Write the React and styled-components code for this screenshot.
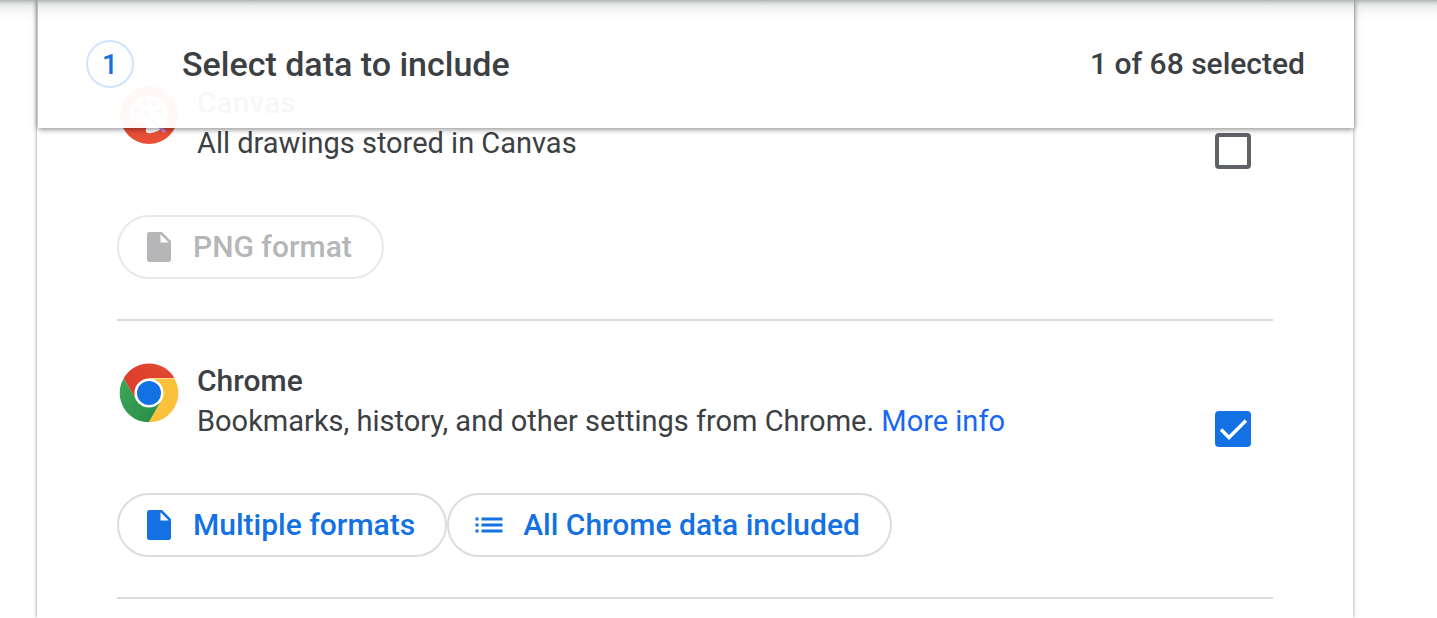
import React, { useState } from "react";
import styled, { createGlobalStyle, css } from "styled-components";

const GlobalStyle = createGlobalStyle`
  *, *::before, *::after { box-sizing: border-box; }
  body {
    margin: 0;
    background: #fff;
    color: #3c4043;
    font-family: Roboto, "Liberation Sans", sans-serif;
    font-size: 29px;
    line-height: 40px;
    overflow: hidden;
  }
`;

const Page = styled.div`
  position: relative;
  min-height: 100vh;
  padding: 0 84px 0 37px;
`;

const TopShadow = styled.div`
  position: absolute;
  inset: 0 0 auto;
  height: 20px;
  z-index: 3;
  pointer-events: none;
  background: linear-gradient(
    rgba(60, 70, 66, 0.4) 0,
    rgba(60, 70, 66, 0.2) 3px,
    rgba(60, 70, 66, 0.1) 6px,
    rgba(60, 70, 66, 0.03) 13px,
    rgba(60, 70, 66, 0) 20px
  );
`;

const Card = styled.main`
  position: relative;
  min-height: 100vh;
  background: #fff;
  box-shadow: 0 0 4px rgba(0, 0, 0, 0.4);
`;

const StepHeader = styled.header`
  position: absolute;
  inset: 0 -1px auto 1px;
  z-index: 2;
  display: flex;
  align-items: center;
  height: 128px;
  padding: 0 49px 0 48px;
  background: rgba(255, 255, 255, 0.96);
  box-shadow: 0 1px 6px rgba(0, 0, 0, 0.5);
`;

const StepNumber = styled.span`
  display: grid;
  place-items: center;
  width: 48px;
  height: 48px;
  margin-right: 48px;
  padding-top: 2px;
  border: 2px solid #d2e3fc;
  border-radius: 50%;
  color: #1471e4;
  font-size: 28px;
  font-weight: 500;
`;

const StepTitle = styled.h1`
  flex: 1;
  margin: 0;
  font-size: 34px;
  font-weight: 500;
`;

const Count = styled.span`
  font-size: 30px;
  font-weight: 500;
`;

const ProductList = styled.ul`
  list-style: none;
  margin: 0;
  padding: 41px 80px 0 80px;
`;

const Product = styled.li`
  display: grid;
  grid-template-columns: 80px 1fr 58px;
  padding: 40px 0;
  border-bottom: 2px solid #dadce0;

  &:first-child { border-top: 2px solid #dadce0; }
`;

const Logo = styled.svg`
  width: 64px;
  height: 64px;
`;

const ProductName = styled.h2`
  margin: 0;
  font-size: 30px;
  font-weight: 500;
`;

const Description = styled.p`
  margin: 0;
`;

const MoreInfo = styled.a`
  color: #1967f2;
  text-decoration: none;
`;

const Tick = styled.input`
  appearance: none;
  width: 36px;
  height: 36px;
  margin: 50px 0 0;
  border: 4px solid #5f6368;
  border-radius: 4px;

  &:checked {
    border: 0;
    background: #1471e4;
  }
`;

const TickCell = styled.label`
  display: grid;
  grid-template-columns: 36px;
  align-content: start;
  > * { grid-area: 1 / 1; }
`;

const TickMark = styled.svg`
  width: 36px;
  height: 36px;
  margin-top: 50px;
  pointer-events: none;
`;

const Chips = styled.div`
  grid-column: 1 / -1;
  display: flex;
  margin-top: 46px;
`;

const Chip = styled.button`
  display: flex;
  align-items: center;
  gap: 16px;
  height: 64px;
  padding: 0 30px 0 22px;
  border: 2px solid #dadce0;
  border-radius: 32px;
  background: transparent;
  color: #1471e4;
  font: 500 30px/40px Roboto, "Liberation Sans", sans-serif;
  white-space: nowrap;

  svg { width: 36px; height: 36px; fill: currentColor; }

  ${(p) => p.disabled && css`
    border-color: #e8e8e9;
    color: #b5b6b8;
  `}
`;

const FileIcon = () => (
  <svg viewBox="0 0 24 24" aria-hidden="true">
    <path d="M5.500 2C4.700 2 4 2.700 4 3.500V20.500C4 21.300 4.700 22 5.500 22H18.500C19.300 22 20 21.300 20 20.500V8L14 2H5.500ZM13 9V3.500L18.500 9H13Z" />
  </svg>
);

const ListIcon = () => (
  <svg viewBox="0 0 24 24" aria-hidden="true">
    <path d="M3 7h2v2H3zM3 11h2v2H3zM3 15h2v2H3zM7 7h14v2H7zM7 11h14v2H7zM7 15h14v2H7z" />
  </svg>
);

const CanvasLogo = () => (
  <Logo viewBox="0 0 64 64" aria-hidden="true">
    <circle cx="32" cy="32" r="29" fill="#e94f37" />
    <path
      d="M32 13C21 13 13 21 13 30C13 37 18 41 25 40C30 40 31 43 29 46C28 49 30 51 34 50C44 49 51 41 51 31C51 21 43 13 32 13Z"
      fill="#fff"
    />
    <g fill="#e94f37">
      <circle cx="27" cy="20" r="3" />
      <circle cx="37" cy="20" r="3" />
      <circle cx="20" cy="28" r="3" />
      <circle cx="44" cy="28" r="3" />
    </g>
    <path d="M29 31L48 49" stroke="#c58af0" strokeWidth="3" />
    <circle cx="29" cy="30" r="3" fill="#e94f37" />
  </Logo>
);

const ChromeLogo = () => (
  <Logo viewBox="0 0 64 64" aria-hidden="true">
    <defs>
      <linearGradient id="red" x1="0" y1="1" x2="1" y2="0">
        <stop offset="0" stopColor="#d93a28" />
        <stop offset="1" stopColor="#e34a33" />
      </linearGradient>
      <linearGradient id="green" x1="1" y1="1" x2="0" y2="0">
        <stop offset="0" stopColor="#278c46" />
        <stop offset="1" stopColor="#3fa65a" />
      </linearGradient>
    </defs>
    <path d="M32 17H57.400A29.300 29.300 0 0 0 6.600 17.400L19.500 39.200L32 32Z" fill="url(#red)" />
    <path d="M19.500 39.200L6.600 17.400A29.300 29.300 0 0 0 32 61.300L44.500 39.200L32 32Z" fill="url(#green)" />
    <path d="M32 17.400H57.400A29.300 29.300 0 0 1 32 61.300L44.500 39.200L32 32Z" fill="#fbc13a" />
    <circle cx="32" cy="32" r="14.600" fill="#fff" />
    <circle cx="32" cy="32" r="12" fill="#1471e4" />
  </Logo>
);

function ProductRow({ logo, name, description, selected, children }) {
  const [checked, setChecked] = useState(selected);
  return (
    <Product>
      {logo}
      <div>
        <ProductName>{name}</ProductName>
        <Description>{description}</Description>
      </div>
      <TickCell>
        <Tick
          type="checkbox"
          aria-label={name}
          checked={checked}
          onChange={(e) => setChecked(e.target.checked)}
        />
        {checked && (
          <TickMark viewBox="0 0 36 36" aria-hidden="true">
            <path d="M6 18.500L14 26.500L31 9.500" fill="none" stroke="#fff" strokeWidth="3.400" />
          </TickMark>
        )}
      </TickCell>
      <Chips>{children}</Chips>
    </Product>
  );
}

export default function App() {
  return (
    <Page>
      <GlobalStyle />
      <TopShadow />
      <Card>
        <StepHeader>
          <StepNumber>1</StepNumber>
          <StepTitle>Select data to include</StepTitle>
          <Count>1 of 68 selected</Count>
        </StepHeader>
        <ProductList>
          <ProductRow
            logo={<CanvasLogo />}
            name="Canvas"
            description="All drawings stored in Canvas"
            selected={false}
          >
            <Chip type="button" disabled><FileIcon />PNG format</Chip>
          </ProductRow>
          <ProductRow
            logo={<ChromeLogo />}
            name="Chrome"
            description={
              <>
                Bookmarks, history, and other settings from Chrome.{" "}
                <MoreInfo href="#chrome">More info</MoreInfo>
              </>
            }
            selected
          >
            <Chip type="button"><FileIcon />Multiple formats</Chip>
            <Chip type="button"><ListIcon />All Chrome data included</Chip>
          </ProductRow>
        </ProductList>
      </Card>
    </Page>
  );
}
